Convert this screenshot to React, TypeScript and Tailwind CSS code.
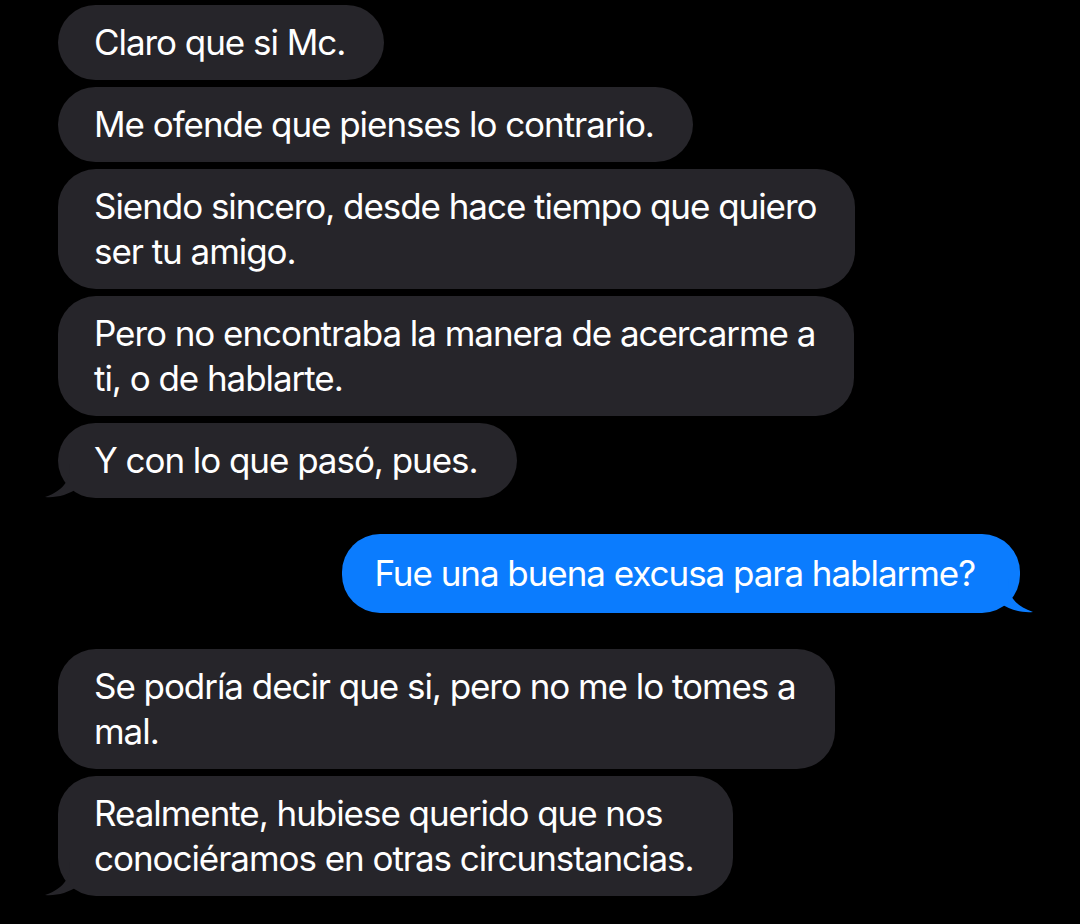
import React from "react"

type Msg = { from: "them" | "me"; lines: string[]; tail?: boolean; gapBefore?: boolean }

const MESSAGES: Msg[] = [
  { from: "them", lines: ["Claro que si Mc."] },
  { from: "them", lines: ["Me ofende que pienses lo contrario."] },
  { from: "them", lines: ["Siendo sincero, desde hace tiempo que quiero", "ser tu amigo."] },
  { from: "them", lines: ["Pero no encontraba la manera de acercarme a", "ti, o de hablarte."] },
  { from: "them", lines: ["Y con lo que pasó, pues."], tail: true },
  { from: "me", lines: ["Fue una buena excusa para hablarme?"], tail: true, gapBefore: true },
  { from: "them", lines: ["Se podría decir que si, pero no me lo tomes a", "mal."], gapBefore: true },
  { from: "them", lines: ["Realmente, hubiese querido que nos", "conociéramos en otras circunstancias."], tail: true },
]

function Tail({ side, color }: { side: "left" | "right"; color: string }) {
  if (side === "left") {
    return (
      <svg className="absolute -left-[14px] bottom-0" width="40" height="34" viewBox="0 0 40 34">
        <path d="M26 0 C26 14 22 26 1 33 C12 34 24 31 34 24 L40 24 L40 0 Z" fill={color} />
      </svg>
    )
  }
  return (
    <svg className="absolute -right-[14px] bottom-0" width="40" height="34" viewBox="0 0 40 34">
      <path d="M14 0 C14 14 18 26 39 33 C28 34 16 31 6 24 L0 24 L0 0 Z" fill={color} />
    </svg>
  )
}

function Bubble({ msg }: { msg: Msg }) {
  const mine = msg.from === "me"
  const color = mine ? "#0b7cfe" : "#26252a"
  return (
    <div className={`flex ${mine ? "justify-end pr-[60px]" : "justify-start pl-[58px]"} ${msg.gapBefore ? "mt-[29px]" : ""}`}>
      <div
        className={`relative rounded-[38px] text-[35px] leading-[45px] tracking-[-0.03em] text-white whitespace-nowrap ${
          mine ? "bg-[#0b7cfe] pl-[32px] pr-[45px] py-[17px]" : "bg-[#26252a] pl-[36px] pr-[39px] py-[15px]"
        }`}
      >
        {msg.tail && <Tail side={mine ? "right" : "left"} color={color} />}
        <div className="relative">
          {msg.lines.map((l, i) => (
            <div key={i}>{l}</div>
          ))}
        </div>
      </div>
    </div>
  )
}

export default function App() {
  return (
    <div className="w-[1080px] h-[924px] bg-black overflow-hidden pt-[5px] flex flex-col gap-[7px] font-['Inter','Noto_Sans',sans-serif]">
      {MESSAGES.map((m, i) => (
        <Bubble key={i} msg={m} />
      ))}
    </div>
  )
}
